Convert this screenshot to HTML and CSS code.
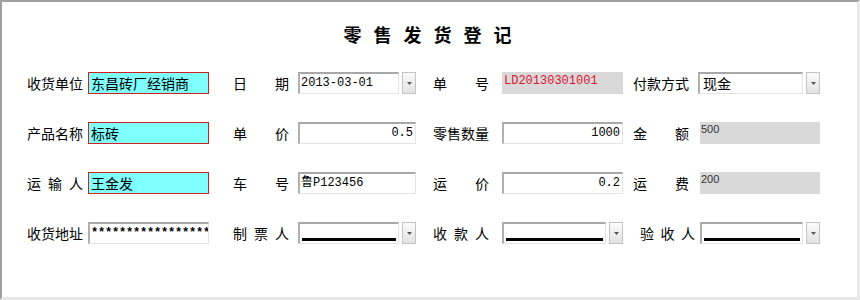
FILE: index.html
```html
<!DOCTYPE html>
<html lang="zh-CN">
<head>
    <meta charset="UTF-8">
    <title>零售发货登记</title>
    <link rel="stylesheet" href="styles.css">
</head>
<body>
<div class="frame">
    <h1 class="title">零售发货登记</h1>
    <div class="form">
        <!-- row 1 -->
        <label class="lbl"><span>收</span><span>货</span><span>单</span><span>位</span></label>
        <div class="ctl"><div class="req">东昌砖厂经销商</div></div>
        <label class="lbl at2"><span>日</span><span>期</span></label>
        <div class="ctl"><div class="box">2013-03-01</div><div class="drop"><svg width="5" height="3" viewBox="0 0 5 3"><path d="M0 0h5L2.5 3z" fill="#555"/></svg></div></div>
        <label class="lbl at3"><span>单</span><span>号</span></label>
        <div class="ctl"><div class="ro red">LD20130301001</div></div>
        <label class="lbl at4"><span>付</span><span>款</span><span>方</span><span>式</span></label>
        <div class="ctl wide"><div class="box cjk">现金</div><div class="drop"><svg width="5" height="3" viewBox="0 0 5 3"><path d="M0 0h5L2.5 3z" fill="#555"/></svg></div></div>

        <!-- row 2 -->
        <label class="lbl"><span>产</span><span>品</span><span>名</span><span>称</span></label>
        <div class="ctl"><div class="req">标砖</div></div>
        <label class="lbl at2"><span>单</span><span>价</span></label>
        <div class="ctl"><div class="box num">0.5</div></div>
        <label class="lbl at3"><span>零</span><span>售</span><span>数</span><span>量</span></label>
        <div class="ctl"><div class="box num">1000</div></div>
        <label class="lbl at4"><span>金</span><span>额</span></label>
        <div class="ctl"><div class="ro sum">500</div></div>

        <!-- row 3 -->
        <label class="lbl"><span>运</span><span>输</span><span>人</span></label>
        <div class="ctl"><div class="req">王金发</div></div>
        <label class="lbl at2"><span>车</span><span>号</span></label>
        <div class="ctl"><div class="box">鲁P123456</div></div>
        <label class="lbl at3"><span>运</span><span>价</span></label>
        <div class="ctl"><div class="box num">0.2</div></div>
        <label class="lbl at4"><span>运</span><span>费</span></label>
        <div class="ctl"><div class="ro sum">200</div></div>

        <!-- row 4 -->
        <label class="lbl"><span>收</span><span>货</span><span>地</span><span>址</span></label>
        <div class="ctl"><div class="box pwd">*****************</div></div>
        <label class="lbl at2"><span>制</span><span>票</span><span>人</span></label>
        <div class="ctl"><div class="box pick"><span class="line"></span></div><div class="drop"><svg width="5" height="3" viewBox="0 0 5 3"><path d="M0 0h5L2.5 3z" fill="#555"/></svg></div></div>
        <label class="lbl at3"><span>收</span><span>款</span><span>人</span></label>
        <div class="ctl"><div class="box pick"><span class="line"></span></div><div class="drop"><svg width="5" height="3" viewBox="0 0 5 3"><path d="M0 0h5L2.5 3z" fill="#555"/></svg></div></div>
        <label class="lbl at4 tight"><span>验</span><span>收</span><span>人</span></label>
        <div class="ctl"><div class="box pick"><span class="line"></span></div><div class="drop"><svg width="5" height="3" viewBox="0 0 5 3"><path d="M0 0h5L2.5 3z" fill="#555"/></svg></div></div>
    </div>
</div>
</body>
</html>
```

FILE: styles.css
```css
body {
    margin: 0;
    background: #fff;
    font-family: "Noto Sans CJK SC", sans-serif;
    color: #000;
}
.frame {
    width: 860px;
    height: 300px;
    box-sizing: border-box;
    border-style: solid;
    border-width: 2px 3px 3px 2px;
    border-color: #a0a0a0 #e8e8e8 #e8e8e8 #a0a0a0;
    padding: 20px 0 0 25px;
}
.title {
    margin: 0 0 0 -25px;
    font-size: 18px;
    line-height: 24px;
    font-weight: bold;
    letter-spacing: 12px;
    text-align: center;
    padding-left: 8px;
}
.form {
    margin-top: 26px;
    display: grid;
    grid-template-columns: 61px 121px 89px 118px 86px 121px 77px 120px;
    grid-auto-rows: 22px;
    row-gap: 28px;
    align-items: center;
}
.lbl {
    width: 56px;
    display: flex;
    justify-content: space-between;
    font-size: 14px;
    line-height: 16px;
}
.lbl.at2 { margin-left: 24px; }
.lbl.at3 { margin-left: 17px; }
.lbl.at4 { margin-left: 10px; }
.lbl.tight { margin-left: 17px; width: 55px; }
.ctl {
    display: flex;
    gap: 3px;
    height: 22px;
}
.ctl.wide { margin-left: -2px; }
.req {
    flex: 1;
    border: 1px solid #cc2222;
    background: #80ffff;
    font-size: 14px;
    line-height: 20px;
    padding-left: 2px;
    overflow: hidden;
    white-space: nowrap;
}
.box {
    flex: 1;
    min-width: 0;
    box-sizing: border-box;
    border-style: solid;
    border-width: 2px 1px 1px 2px;
    border-color: #a8a8a8 #e4e4e4 #e4e4e4 #b0b0b0;
    background: #fff;
    font-family: "Liberation Mono", "Noto Sans CJK SC", monospace;
    font-size: 12px;
    line-height: 18px;
    padding: 0 2px 0 1px;
    overflow: hidden;
    white-space: nowrap;
}
.box.cjk {
    font-family: "Noto Sans CJK SC", sans-serif;
    font-size: 14px;
    padding-left: 3px;
}
.box.num { text-align: right; }
.box.pwd { letter-spacing: -0.2px; font-weight: bold; }
.box.pick {
    display: flex;
    align-items: flex-end;
    padding: 0 2px 2px;
}
.line {
    flex: 1;
    border-bottom: 3px solid #000;
}
.ro {
    flex: 1;
    background: #d9d9d9;
    overflow: hidden;
    white-space: nowrap;
}
.ro.red {
    color: #dd1133;
    font-family: "Liberation Mono", monospace;
    font-size: 12px;
    line-height: 18px;
    padding-left: 2px;
}
.ro.sum {
    font-family: "Liberation Sans", sans-serif;
    font-size: 11px;
    line-height: 14px;
    color: #333;
    padding-left: 1px;
}
.drop {
    width: 14px;
    box-sizing: border-box;
    border: 1px solid #c4c4c4;
    background: linear-gradient(#fbfbfb, #e2e2e2);
    display: flex;
    align-items: center;
    justify-content: center;
}
```
